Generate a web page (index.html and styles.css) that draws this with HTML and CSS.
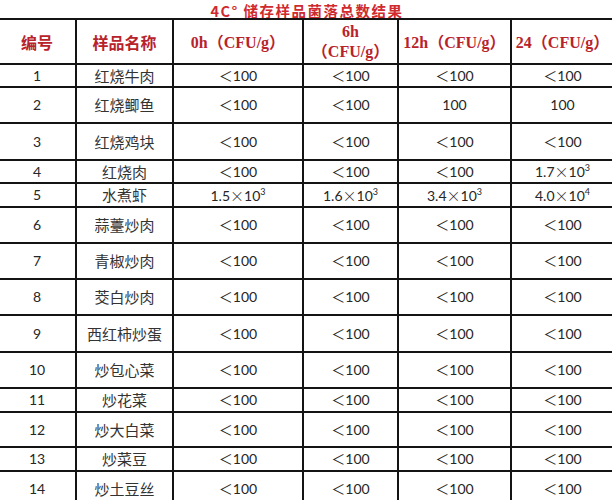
FILE: index.html
```html
<!DOCTYPE html>
<html lang="zh-CN">
<head>
<meta charset="utf-8">
<title>4C° 储存样品菌落总数结果</title>
<link rel="stylesheet" href="styles.css">
</head>
<body>
<div class="page">
  <h1 class="title">4C° 储存样品菌落总数结果</h1>
  <table class="grid">
    <colgroup>
      <col class="c1"><col class="c2"><col class="c3"><col class="c4"><col class="c5"><col class="c6">
    </colgroup>
    <thead>
      <tr class="h45">
        <th class="cn">编号</th>
        <th class="cn">样品名称</th>
        <th>0h<span class="fw">（</span>CFU/g<span class="fw">）</span></th>
        <th class="two">6h<br><span class="fw">（</span>CFU/g<span class="fw">）</span></th>
        <th>12h<span class="fw">（</span>CFU/g<span class="fw">）</span></th>
        <th>24<span class="fw">（</span>CFU/g<span class="fw">）</span></th>
      </tr>
    </thead>
    <tbody>
      <tr class="h23"><td>1</td><td class="name">红烧牛肉</td><td>＜100</td><td>＜100</td><td>＜100</td><td>＜100</td></tr>
      <tr class="h36"><td>2</td><td class="name">红烧鲫鱼</td><td>＜100</td><td>＜100</td><td>100</td><td>100</td></tr>
      <tr class="h37"><td>3</td><td class="name">红烧鸡块</td><td>＜100</td><td>＜100</td><td>＜100</td><td>＜100</td></tr>
      <tr class="h23"><td>4</td><td class="name">红烧肉</td><td>＜100</td><td>＜100</td><td>＜100</td><td>1.7<span class="x">×</span>10<sup>3</sup></td></tr>
      <tr class="h24"><td>5</td><td class="name">水煮虾</td><td>1.5<span class="x">×</span>10<sup>3</sup></td><td>1.6<span class="x">×</span>10<sup>3</sup></td><td>3.4<span class="x">×</span>10<sup>3</sup></td><td>4.0<span class="x">×</span>10<sup>4</sup></td></tr>
      <tr class="h36"><td>6</td><td class="name">蒜薹炒肉</td><td>＜100</td><td>＜100</td><td>＜100</td><td>＜100</td></tr>
      <tr class="h36"><td>7</td><td class="name">青椒炒肉</td><td>＜100</td><td>＜100</td><td>＜100</td><td>＜100</td></tr>
      <tr class="h36"><td>8</td><td class="name">茭白炒肉</td><td>＜100</td><td>＜100</td><td>＜100</td><td>＜100</td></tr>
      <tr class="h37"><td>9</td><td class="name">西红柿炒蛋</td><td>＜100</td><td>＜100</td><td>＜100</td><td>＜100</td></tr>
      <tr class="h36"><td>10</td><td class="name">炒包心菜</td><td>＜100</td><td>＜100</td><td>＜100</td><td>＜100</td></tr>
      <tr class="h24"><td>11</td><td class="name">炒花菜</td><td>＜100</td><td>＜100</td><td>＜100</td><td>＜100</td></tr>
      <tr class="h35"><td>12</td><td class="name">炒大白菜</td><td>＜100</td><td>＜100</td><td>＜100</td><td>＜100</td></tr>
      <tr class="h24"><td>13</td><td class="name">炒菜豆</td><td>＜100</td><td>＜100</td><td>＜100</td><td>＜100</td></tr>
      <tr class="h36"><td>14</td><td class="name">炒土豆丝</td><td>＜100</td><td>＜100</td><td>＜100</td><td>＜100</td></tr>
    </tbody>
  </table>
</div>
</body>
</html>
```
FILE: styles.css
```css
html, body {
  margin: 0;
  padding: 0;
  background: #ffffff;
}
.page {
  width: 612px;
  height: 500px;
  overflow: hidden;
}
.title {
  margin: 0;
  padding: 0 0 0 2px;
  height: 18px;
  line-height: 21px;
  text-align: center;
  font-family: "Noto Sans CJK SC", "Liberation Sans", sans-serif;
  font-weight: 700;
  font-size: 14.5px;
  letter-spacing: 1.5px;
  color: #cf2a2e;
}
.grid {
  position: relative;
  border-collapse: collapse;
  table-layout: fixed;
  width: 614px;
  margin-left: -1px;
  background: #ffffff;
}
.c1 { width: 77px; }
.c2 { width: 97px; }
.c3 { width: 130px; }
.c4 { width: 95px; }
.c5 { width: 113px; }
.c6 { width: 102px; }
.grid th, .grid td {
  border: 2px solid #141414;
  padding: 0;
  text-align: center;
  vertical-align: middle;
  white-space: nowrap;
  overflow: hidden;
}
.grid tr > :first-child { border-left: none; }
.grid tr > :last-child { border-right: none; }
.grid th {
  font-family: "Liberation Serif", "Noto Sans CJK SC", serif;
  font-weight: 700;
  font-size: 16px;
  color: #b8232b;
  line-height: 20px;
}
.grid th.cn {
  font-family: "Noto Sans CJK SC", sans-serif;
  font-size: 16px;
}
.grid th.two { line-height: 19px; }
.fw {
  font-family: "Noto Sans CJK SC", sans-serif;
  font-weight: 700;
}
.grid td {
  font-family: Lato, "Noto Sans CJK SC", sans-serif;
  font-size: 14px;
  color: #262626;
  line-height: 18px;
}
.grid td.name {
  font-family: "Noto Sans CJK SC", sans-serif;
  font-weight: 400;
  font-size: 15px;
  color: #333333;
}
.x {
  font-family: "Noto Sans CJK SC", sans-serif;
  font-weight: 300;
}
sup {
  font-size: 9px;
  line-height: 0;
  vertical-align: 6px;
}
.h45 { height: 45px; }
.h23 { height: 23px; }
.h24 { height: 24px; }
.h35 { height: 35px; }
.h36 { height: 36px; }
.h37 { height: 37px; }
```
